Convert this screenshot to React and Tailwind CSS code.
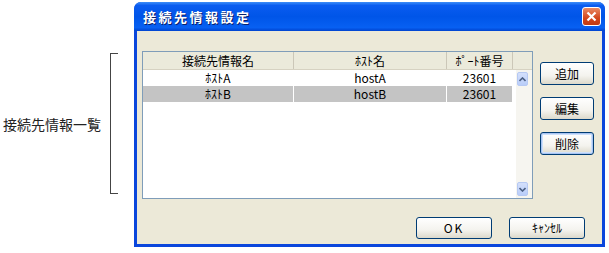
import React from 'react';

const jp = { fontFamily: '"Noto Sans CJK JP", "Noto Sans", sans-serif' };

const rows = [
  { name: 'ﾎｽﾄA', host: 'hostA', port: '23601', selected: false },
  { name: 'ﾎｽﾄB', host: 'hostB', port: '23601', selected: true },
];

function XpButton({ children, className = '', isDefault = false }) {
  return (
    <button
      className={`flex items-center justify-center rounded-[3px] border border-[#003c74] bg-[linear-gradient(to_bottom,#ffffff_0%,#f4f3ee_60%,#dcd9cb_100%)] text-[12px] leading-none text-black ${
        isDefault ? 'shadow-[inset_0_0_0_1px_#a8c4f2,inset_0_0_0_2px_#cde0fb]' : ''
      } ${className}`}
      style={jp}
    >
      {children}
    </button>
  );
}

function ScrollArrow({ up }) {
  return (
    <div className="ml-[1px] flex h-[14px] w-[11px] items-center justify-center rounded-[2px] border border-[#b6c9f3] bg-[linear-gradient(to_bottom,#d4e0fc,#b9cdf9)]">
      <svg width="7" height="5" viewBox="0 0 7 5">
        <path
          d={up ? 'M0.5 4 L3.5 1 L6.5 4' : 'M0.5 1 L3.5 4 L6.5 1'}
          fill="none"
          stroke="#4d6185"
          strokeWidth="1.6"
        />
      </svg>
    </div>
  );
}

export default function App() {
  return (
    <div className="flex h-[253px] w-[609px] overflow-hidden bg-white" style={jp}>
      {/* 注釈 */}
      <div className="mt-[53px] flex h-[141px] items-center">
        <div className="w-[110px] pl-[3px] text-[14px] leading-none text-[#222]">接続先情報一覧</div>
        <div className="h-full w-[8px] border-y border-l border-[#444]" />
      </div>

      {/* ダイアログ */}
      <div className="ml-[16px] mt-[2px] flex h-[245px] w-[471px] flex-col rounded-t-[7px] bg-[#0a46dc]">
        <div className="flex h-[29px] items-center justify-between rounded-t-[7px] bg-[linear-gradient(to_bottom,#3d8ef8_0%,#0a5cf0_12%,#0055e8_50%,#0760f2_88%,#0043cf_100%)] pl-[9px] pr-[4px]">
          <span className="text-[13px] font-bold tracking-[2.5px] text-white [text-shadow:1px_1px_0_#0a1f6b]">
            接続先情報設定
          </span>
          <div className="flex h-[19px] w-[19px] items-center justify-center rounded-[3px] border border-white bg-[linear-gradient(to_bottom,#e98a64,#d2461c_60%,#c23a12)]">
            <svg width="11" height="11" viewBox="0 0 11 11">
              <path d="M1.5 1.5 L9.5 9.5 M9.5 1.5 L1.5 9.5" stroke="white" strokeWidth="2.2" />
            </svg>
          </div>
        </div>

        <div className="mx-[3px] mb-[3px] flex flex-1 flex-col bg-[#ece9d8]">
          <div className="flex pl-[5px] pt-[20px]">
            {/* リスト */}
            <div className="flex h-[148px] w-[391px] flex-col border border-[#7f9db9] bg-white">
              <div className="flex h-[18px] items-center border-b border-[#d6d2c2] bg-[#ebeadb] text-[12px] leading-none text-black">
                <div className="flex h-full w-[151px] items-center justify-center border-r border-[#cbc7b8]">接続先情報名</div>
                <div className="flex h-full w-[153px] items-center justify-center border-r border-[#cbc7b8]">ﾎｽﾄ名</div>
                <div className="flex h-full w-[66px] items-center justify-center border-r border-[#cbc7b8]">ﾎﾟｰﾄ番号</div>
                <div className="flex-1" />
              </div>
              <div className="flex flex-1">
                <div className="flex flex-1 flex-col">
                  {rows.map((r) => (
                    <div key={r.name} className="flex h-[16px] text-[12px] leading-none text-black">
                      {[
                        [r.name, 'w-[151px]'],
                        [r.host, 'w-[153px]'],
                        [r.port, 'w-[66px]'],
                      ].map(([t, w], i) => (
                        <div
                          key={i}
                          className={`flex h-full items-center justify-center border-r border-white ${w} ${
                            r.selected ? 'bg-[#c4c4c4]' : ''
                          }`}
                        >
                          {t}
                        </div>
                      ))}
                    </div>
                  ))}
                </div>
                <div className="flex w-[16px] flex-col justify-between bg-[#f6f5f0] py-[2px]">
                  <ScrollArrow up />
                  <ScrollArrow />
                </div>
              </div>
            </div>

            {/* ボタン */}
            <div className="ml-[7px] flex flex-col gap-[12px] pt-[11px]">
              <XpButton className="h-[23px] w-[54px]">追加</XpButton>
              <XpButton className="h-[23px] w-[54px]">編集</XpButton>
              <XpButton className="h-[23px] w-[54px]" isDefault>
                削除
              </XpButton>
            </div>
          </div>

          <div className="mt-[18px] flex justify-end gap-[17px] pr-[17px]">
            <XpButton className="h-[22px] w-[76px] tracking-[2px]">OK</XpButton>
            <XpButton className="h-[22px] w-[76px]">ｷｬﾝｾﾙ</XpButton>
          </div>
        </div>
      </div>
    </div>
  );
}
